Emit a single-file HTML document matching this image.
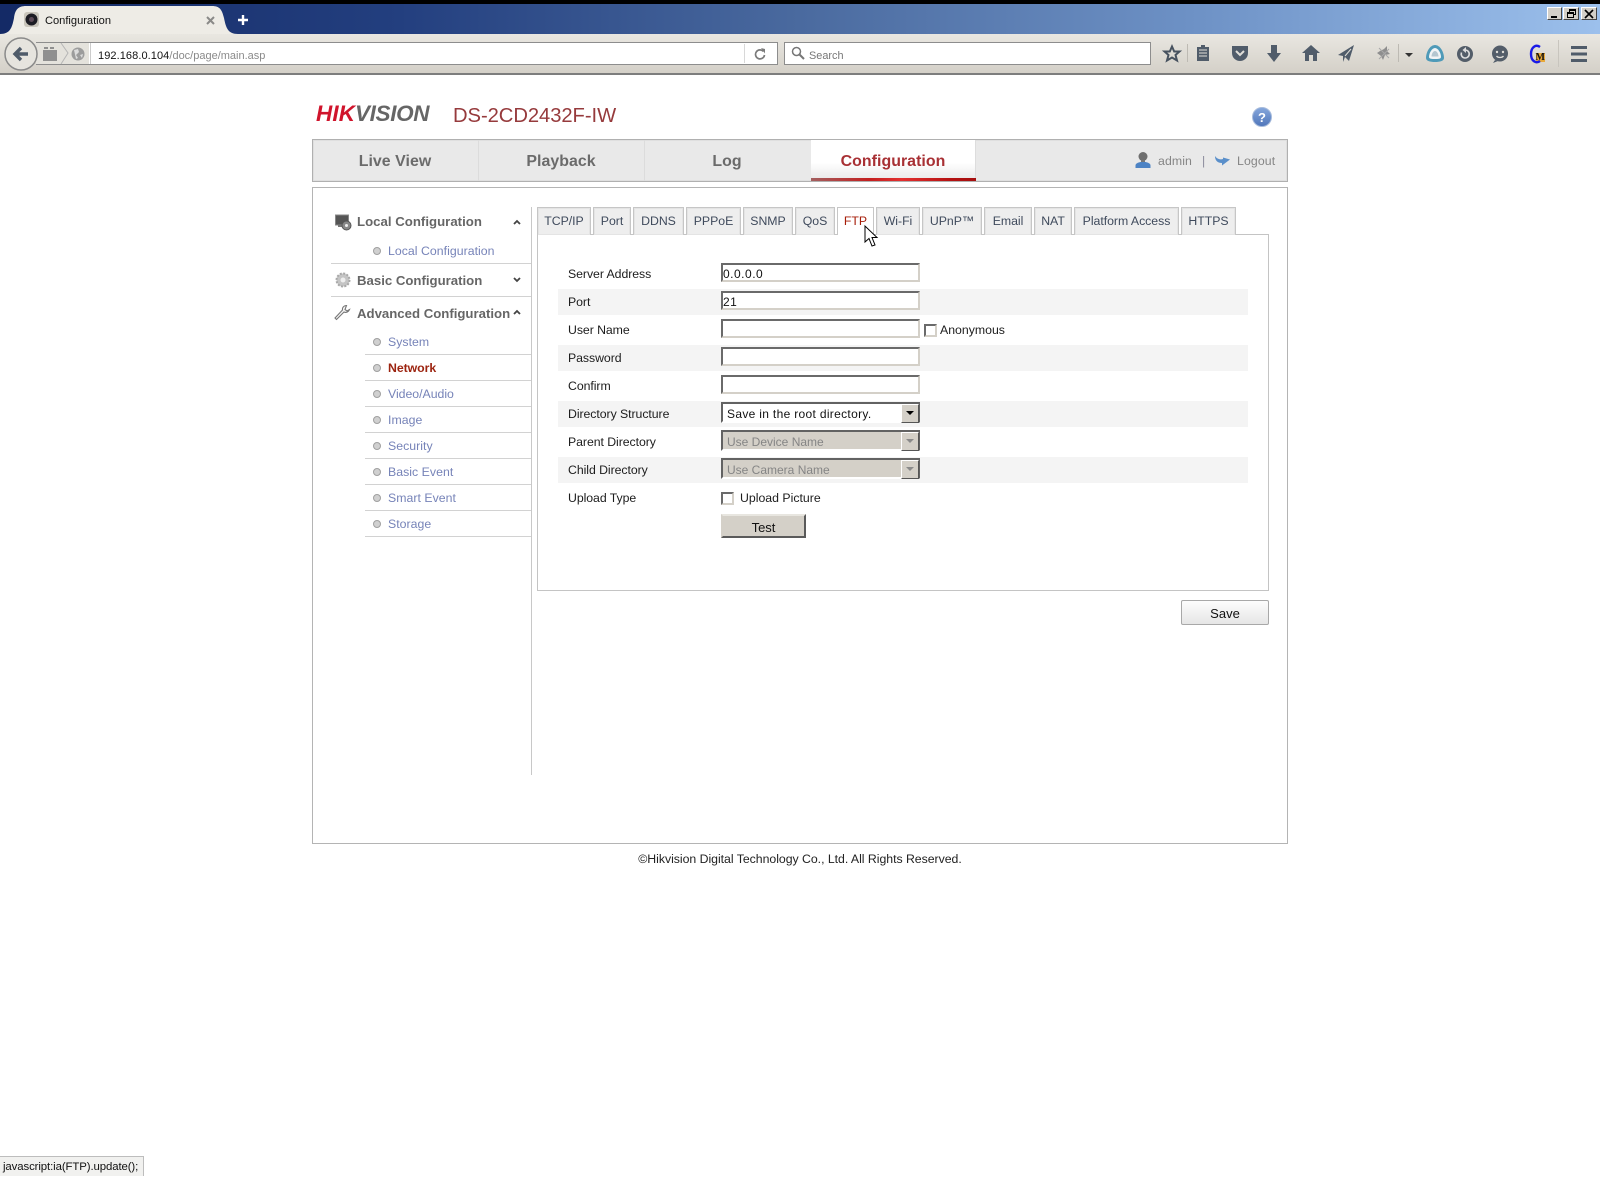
<!DOCTYPE html>
<html><head><meta charset="utf-8"><title>Configuration</title>
<style>
html,body{margin:0;padding:0;background:#fff}
body{width:1600px;height:1176px;position:relative;overflow:hidden;font-family:"Liberation Sans",sans-serif;font-size:12.3px;color:#222}
.a,.l,.s,.b,.t,.i,.sel,.cb,.ln,.dot{position:absolute;box-sizing:border-box}
.a{white-space:nowrap}
.l{left:568px;height:20px;line-height:20px;white-space:nowrap;color:#1c1c1c;letter-spacing:-.06px}
.b{left:558px;width:690px;height:26px;background:#f4f4f4}
.s{left:388px;height:20px;line-height:20px;white-space:nowrap;color:#7683b8;letter-spacing:.03px}
.ln{left:365px;width:166px;height:1px;background:#d2d2d2}
.dot{left:373px;width:8px;height:8px;border-radius:50%;background:#d0d0d0;border:1px solid #a0a0a0}
.t{top:207px;height:28px;background:#eeeeee;border:1px solid #c6c6c6;border-bottom:0;box-shadow:inset 0 0 0 1px #e4e4e4;text-align:center;line-height:27px;color:#3f4a5c;white-space:nowrap;letter-spacing:-.03px}
.i{left:721px;width:199px;height:19px;background:#fff;border:2px solid;border-color:#6a6a6a #d4d0c8 #d4d0c8 #6a6a6a;font-size:12px;line-height:19px;padding-left:0;letter-spacing:.5px;color:#111}
.sel{left:721px;width:199px;height:21px;background:#fff;border:2px solid;border-color:#626262 #626262 #fff #626262;font-size:12px;line-height:20px;padding-left:4px;letter-spacing:.32px;color:#111;white-space:nowrap}
.sel.d{background:#d4d0c8;color:#858585;letter-spacing:0}
.sel i{position:absolute;right:-1px;top:0;width:16px;height:17px;background:#d4d0c8;border:1px solid;border-color:#fff #555 #555 #fff}
.sel i:after{content:"";position:absolute;left:4px;top:6px;border:4px solid transparent;border-top:4px solid #000;border-bottom:0}
.sel.d i:after{border-top-color:#8a8a8a}
.cb{width:13px;height:13px;background:#fff;border:2px solid;border-color:#6a6a6a #d4d0c8 #d4d0c8 #6a6a6a}
.m{color:#666;font-weight:bold;font-size:13.2px;height:20px;line-height:20px;left:357px;letter-spacing:0}
.n{font-weight:bold;font-size:15.9px;color:#6b6b6b;top:152px;height:20px;line-height:20px;text-align:center;width:160px;letter-spacing:.05px}
svg{position:absolute;overflow:visible}
</style></head><body>

<!-- browser chrome -->
<div class="a" style="left:0;top:0;width:1600px;height:4px;background:#000"></div>
<div class="a" style="left:0;top:4px;width:1600px;height:30px;background:linear-gradient(90deg,#142a66 0%,#233f7f 25%,#4a6a9f 50%,#6e92c6 75%,#9cc0ec 100%)"></div>
<div class="a" style="left:0;top:34px;width:1600px;height:40px;background:linear-gradient(#e9e7e1,#d4d0c8);border-bottom:2px solid #7d7d7d;box-sizing:content-box;height:39px"></div>
<svg style="left:0;top:0" width="260" height="36"><path d="M0 34C10 34 12 28 14 18C15 10 18 6 26 6H212C220 6 222 10 224 18C226 28 228 34 238 34Z" fill="#eeece6"/></svg>
<svg style="left:24px;top:12px" width="16" height="16"><rect x="0" y="0" width="15" height="15" rx="3" fill="#c9c5bb"/><circle cx="7.5" cy="7.5" r="6" fill="#1c1c24"/><circle cx="7.5" cy="7.5" r="2.5" fill="#5c4a58"/></svg>
<div class="a" style="left:45px;top:13px;height:16px;line-height:16px;font-size:11.1px;color:#111">Configuration</div>
<svg style="left:206px;top:16px" width="9" height="9"><path d="M1 1L8 8M8 1L1 8" stroke="#8a8a88" stroke-width="2"/></svg>
<svg style="left:237px;top:14px" width="12" height="12"><path d="M6 1V11M1 6H11" stroke="#fff" stroke-width="2.4"/></svg>
<div class="a" style="left:1547px;top:7px;width:15px;height:13px;background:#d4d0c8;border:1px solid;border-color:#fff #444 #444 #fff"><div class="a" style="left:3px;top:8px;width:6px;height:2px;background:#000"></div></div>
<div class="a" style="left:1563px;top:7px;width:16px;height:13px;background:#d4d0c8;border:1px solid;border-color:#fff #444 #444 #fff"><div class="a" style="left:5px;top:1px;width:7px;height:6px;border:1px solid #000;border-top-width:2px"></div><div class="a" style="left:3px;top:4px;width:7px;height:6px;border:1px solid #000;border-top-width:2px;background:#d4d0c8"></div></div>
<div class="a" style="left:1581px;top:7px;width:16px;height:13px;background:#d4d0c8;border:1px solid;border-color:#fff #444 #444 #fff"><svg style="left:3px;top:2px" width="8" height="8"><path d="M0 0L8 8M8 0L0 8" stroke="#000" stroke-width="1.6"/></svg></div>

<!-- url bar -->
<div class="a" style="left:36px;top:42px;width:742px;height:23px;background:#fff;border:1px solid #8d8d8d"></div>
<div class="a" style="left:36px;top:43px;width:53px;height:21px;background:#e4e2dc"></div>
<svg style="left:4px;top:37px" width="36" height="36"><circle cx="17" cy="17" r="16" fill="#e6e4de" stroke="#8a8a8a" stroke-width="1.5"/><path d="M24 17H12M17 11L11 17L17 23" fill="none" stroke="#4f5b69" stroke-width="3.4"/></svg>
<svg style="left:42px;top:46px" width="16" height="16"><rect x="1" y="4" width="14" height="11" fill="#8f8f8f"/><rect x="2" y="1" width="4" height="2" fill="#8f8f8f"/><rect x="8" y="1" width="4" height="2" fill="#8f8f8f"/></svg>
<svg style="left:60px;top:43px" width="10" height="21"><path d="M1 0L8 10L1 21" fill="none" stroke="#b5b5b5"/></svg>
<svg style="left:71px;top:47px" width="14" height="14"><circle cx="7" cy="7" r="6.5" fill="#9c9c9c"/><path d="M3 3L7 2L8 5L5 8L7 11L5 12ZM9 8L12 7L11 11Z" fill="#dcdcdc"/></svg>
<div class="a" style="left:90px;top:43px;width:1px;height:21px;background:#ccc"></div>
<div class="a" style="left:98px;top:48px;height:16px;line-height:16px;font-size:11px;color:#8a8a8a;letter-spacing:0"><span style="color:#111;letter-spacing:.08px">192.168.0.104</span>/doc/page/main.asp</div>
<div class="a" style="left:744px;top:44px;width:1px;height:19px;background:#d8d8d8"></div>
<svg style="left:754px;top:48px" width="12" height="12"><path d="M9.5 3.5A4.5 4.5 0 1 0 10.5 7" fill="none" stroke="#7b7b7b" stroke-width="1.7"/><path d="M7 0L11 1V5.5Z" fill="#7b7b7b"/></svg>
<div class="a" style="left:784px;top:42px;width:367px;height:23px;background:#fff;border:1px solid #8d8d8d"></div>
<svg style="left:791px;top:46px" width="14" height="14"><circle cx="5.5" cy="5.5" r="4" fill="none" stroke="#777" stroke-width="1.5"/><path d="M8.5 8.5L13 13" stroke="#777" stroke-width="2"/></svg>
<div class="a" style="left:809px;top:48px;height:16px;line-height:16px;font-size:10.9px;color:#777">Search</div>

<!-- toolbar icons -->
<svg style="left:0;top:34px" width="1600" height="40" fill="#505c6a">
<path d="M1172 12.500L1174.200 17.500H1179.500L1175.500 21L1177 26.500L1172 23.500L1167 26.500L1168.500 21L1164.500 17.500H1169.800Z" fill="none" stroke="#47525f" stroke-width="2"/>
<rect x="1187" y="10" width="1" height="18" fill="#bdbab3"/>
<path d="M1201 11H1205V13H1209V27H1197V13H1201Z"/><path d="M1199 16H1207M1199 19H1207M1199 22H1207" stroke="#e0ded8" stroke-width="1"/>
<path d="M1232 12H1248V19C1248 24 1244 27 1240 27C1236 27 1232 24 1232 19Z"/><path d="M1236 17L1240 21L1244 17" fill="none" stroke="#e0ded8" stroke-width="2"/>
<path d="M1271 11H1277V19H1281L1274 28L1267 19H1271Z"/>
<path d="M1311 11L1320 19H1317V27H1313V21H1309V27H1305V19H1302Z"/>
<path d="M1354 11L1349 27L1345 23L1343 28V22L1338 21Z"/><path d="M1351 15L1345 22" stroke="#e0ded8"/>
<path d="M1377 19L1380 17L1384 15L1387 12L1387 17L1390 20L1385 21L1383 26L1381 22Z" fill="#8e8e8e"/><path d="M1379 14L1389 24M1389 15L1379 25" stroke="#a8a8a8"/>
<rect x="1398" y="10" width="1" height="18" fill="#bdbab3"/>
<path d="M1405 19H1413L1409 23Z" fill="#333"/>
<path d="M1435 11C1440 11 1444 18 1444 24C1444 27 1440 28 1435 28C1430 28 1426 27 1426 24C1426 18 1430 11 1435 11Z" fill="#4f9ab8"/><path d="M1435 14C1438 14 1441 19 1441 23C1441 25 1438 25 1435 25C1432 25 1429 25 1429 23C1429 19 1432 14 1435 14Z" fill="#f2f4f6"/><path d="M1435 17C1437 17 1438.500 20 1438.500 22.500H1431.500C1431.500 20 1433 17 1435 17Z" fill="#b4c6d0"/>
<circle cx="1465" cy="20" r="8" fill="#535d69"/><path d="M1461.5 18.5A4 4 0 1 0 1465 16" fill="none" stroke="#ddd" stroke-width="1.6"/><path d="M1466 13V19L1462.5 16Z" fill="#ddd"/>
<circle cx="1500" cy="19.5" r="8" fill="#535d69"/><path d="M1495 26L1493 29L1498 27Z"/><circle cx="1497" cy="18" r="1.2" fill="#e0ded8"/><circle cx="1503" cy="18" r="1.2" fill="#e0ded8"/><path d="M1496.5 22C1498 24 1502 24 1503.5 22" fill="none" stroke="#e0ded8" stroke-width="1.3"/>
<rect x="1536" y="19" width="9" height="9" fill="#e8a93a"/>
<path d="M1540 13C1536 10 1531 13 1531 20C1531 27 1536 30 1540 27" fill="none" stroke="#1a1ae6" stroke-width="2.4"/>
<text x="1535.5" y="26" font-family="Liberation Serif,serif" font-weight="bold" font-size="10" fill="#111">M</text>
<rect x="1558" y="6" width="1" height="27" fill="#c8c5be"/>
<path d="M1571 12H1587V15H1571ZM1571 18.500H1587V21.500H1571ZM1571 25H1587V28H1571Z"/>
</svg>

<!-- header -->
<div class="a" style="left:316px;top:102px;height:24px;line-height:24px;font-size:22.5px;font-weight:bold;font-style:italic;letter-spacing:.1px;color:#d0142c">HIK</div>
<div class="a" style="left:355px;top:102px;height:24px;line-height:24px;font-size:22.5px;font-weight:bold;font-style:italic;letter-spacing:-.35px;color:#666">VISION</div>
<div class="a" style="left:453px;top:103px;height:26px;line-height:26px;font-size:20.2px;color:#963a3c;letter-spacing:-.05px">DS-2CD2432F-IW</div>
<svg style="left:1251px;top:106px" width="22" height="22"><defs><linearGradient id="h" x1="0" y1="0" x2="0" y2="1"><stop offset="0" stop-color="#86a7dc"/><stop offset="1" stop-color="#4f76ba"/></linearGradient></defs><circle cx="11" cy="11" r="9.500" fill="url(#h)" stroke="#a8bcdc"/><text x="11" y="16" font-size="13" font-weight="bold" text-anchor="middle" fill="#fff" font-family="Liberation Sans,sans-serif">?</text></svg>

<!-- nav -->
<div class="a" style="left:312px;top:139px;width:976px;height:43px;background:#e9e9e9;border:1px solid #b0b0b0;box-shadow:inset 0 0 0 1px #bbb3"></div>
<div class="a" style="left:478px;top:140px;width:1px;height:41px;background:#dcdcdc"></div>
<div class="a" style="left:644px;top:140px;width:1px;height:41px;background:#dcdcdc"></div>
<div class="a" style="left:811px;top:140px;width:165px;height:41px;background:linear-gradient(#fff 55%,#e8e8e8);border-right:1px solid #ddd"></div>
<div class="a" style="left:811px;top:178px;width:165px;height:3px;background:linear-gradient(90deg,#a46060,#c32020 35%,#e33030 55%,#b51212 85%,#a51010)"></div>
<div class="a n" style="left:315px">Live View</div>
<div class="a n" style="left:481px">Playback</div>
<div class="a n" style="left:647px">Log</div>
<div class="a n" style="left:813px;color:#a83034">Configuration</div>
<svg style="left:1134px;top:151px" width="18" height="18"><circle cx="9" cy="5.500" r="4.500" fill="#6f6f6f"/><path d="M7 9H11V11H7Z" fill="#777"/><path d="M1.500 17V14.500C1.500 12.500 4 11.500 6.500 11H11.500C14 11.500 16.500 12.500 16.500 14.500V17Z" fill="#4d83c4"/></svg>
<div class="a" style="left:1158px;top:151px;height:20px;line-height:20px;color:#858585;letter-spacing:.1px">admin</div>
<div class="a" style="left:1202px;top:151px;height:20px;line-height:20px;color:#8a8a9c">|</div>
<svg style="left:1214px;top:154px" width="17" height="12"><path d="M1 2C1 7 4 9 8 9V11.500L16 5.500L9 3.500V5C6 6 3 5 1 2Z" fill="#5a8fca"/></svg>
<div class="a" style="left:1237px;top:151px;height:20px;line-height:20px;color:#858585;letter-spacing:.1px">Logout</div>

<!-- main box -->
<div class="a" style="left:312px;top:187px;width:976px;height:657px;border:1px solid #b4b4b4"></div>
<div class="a" style="left:531px;top:207px;width:1px;height:568px;background:#c8c8c8"></div>

<!-- sidebar -->
<svg style="left:335px;top:214px" width="18" height="18"><rect x="0.500" y="1" width="13" height="10" fill="#555" stroke="#888"/><rect x="3" y="11" width="7" height="2" fill="#777"/><circle cx="11.500" cy="11.500" r="4.500" fill="#888" stroke="#555"/><circle cx="11.500" cy="11.500" r="1.500" fill="#eee"/></svg>
<div class="a m" style="top:212px;letter-spacing:.02px">Local Configuration</div>
<svg style="left:513px;top:219px" width="8" height="6"><path d="M1 5L4 2L7 5" fill="none" stroke="#444" stroke-width="1.800"/></svg>
<div class="dot" style="top:247px"></div>
<div class="s" style="top:241px">Local Configuration</div>
<div class="ln" style="left:331px;width:200px;top:263px"></div>
<svg style="left:335px;top:272px" width="16" height="16"><circle cx="8" cy="8" r="6.500" fill="#c4c4c4" stroke="#a8a8a8" stroke-width="2" stroke-dasharray="2 1.400"/><circle cx="8" cy="8" r="2.500" fill="#eee"/></svg>
<div class="a m" style="top:270px;transform:translateY(1px)">Basic Configuration</div>
<svg style="left:513px;top:277px" width="8" height="6"><path d="M1 1L4 4L7 1" fill="none" stroke="#444" stroke-width="1.800"/></svg>
<div class="ln" style="left:331px;width:200px;top:296px"></div>
<svg style="left:333px;top:303px" width="18" height="18"><path d="M2 15L3.500 16.500L11 9C13 10 15.500 9 16.500 6.500L14 8L12 6.500L13.500 2.500C11 2.500 9 4.500 9.500 7Z" fill="#f4f4f4" stroke="#777" stroke-width="1.100"/></svg>
<div class="a m" style="top:304px">Advanced Configuration</div>
<svg style="left:513px;top:309px" width="8" height="6"><path d="M1 5L4 2L7 5" fill="none" stroke="#444" stroke-width="1.800"/></svg>

<div class="dot" style="top:338px"></div><div class="s" style="top:332px">System</div><div class="ln" style="top:354px"></div>
<div class="dot" style="top:364px"></div><div class="s" style="top:358px;color:#9c2410;font-weight:bold;letter-spacing:-.05px">Network</div><div class="ln" style="top:380px"></div>
<div class="dot" style="top:390px"></div><div class="s" style="top:384px;letter-spacing:-.02px">Video/Audio</div><div class="ln" style="top:406px"></div>
<div class="dot" style="top:416px"></div><div class="s" style="top:410px">Image</div><div class="ln" style="top:432px"></div>
<div class="dot" style="top:442px"></div><div class="s" style="top:436px">Security</div><div class="ln" style="top:458px"></div>
<div class="dot" style="top:468px"></div><div class="s" style="top:462px">Basic Event</div><div class="ln" style="top:484px"></div>
<div class="dot" style="top:494px"></div><div class="s" style="top:488px">Smart Event</div><div class="ln" style="top:510px"></div>
<div class="dot" style="top:520px"></div><div class="s" style="top:514px">Storage</div><div class="ln" style="top:536px"></div>

<!-- content box -->
<div class="a" style="left:537px;top:234px;width:732px;height:357px;border:1px solid #c4c4c4"></div>
<div class="t" style="left:537px;width:54px">TCP/IP</div>
<div class="t" style="left:593px;width:38px">Port</div>
<div class="t" style="left:633px;width:51px">DDNS</div>
<div class="t" style="left:686px;width:55px">PPPoE</div>
<div class="t" style="left:743px;width:50px">SNMP</div>
<div class="t" style="left:795px;width:40px">QoS</div>
<div class="t" style="left:837px;width:37px;background:#fff;box-shadow:none;color:#a61c08;height:28px">FTP</div>
<div class="t" style="left:876px;width:44px">Wi-Fi</div>
<div class="t" style="left:922px;width:60px">UPnP™</div>
<div class="t" style="left:984px;width:48px">Email</div>
<div class="t" style="left:1034px;width:38px">NAT</div>
<div class="t" style="left:1074px;width:105px">Platform Access</div>
<div class="t" style="left:1181px;width:55px">HTTPS</div>

<!-- form -->
<div class="b" style="top:289px"></div>
<div class="b" style="top:345px"></div>
<div class="b" style="top:401px"></div>
<div class="b" style="top:457px"></div>

<div class="l" style="top:264px">Server Address</div>
<div class="l" style="top:292px">Port</div>
<div class="l" style="top:320px">User Name</div>
<div class="l" style="top:348px">Password</div>
<div class="l" style="top:376px">Confirm</div>
<div class="l" style="top:404px">Directory Structure</div>
<div class="l" style="top:432px">Parent Directory</div>
<div class="l" style="top:460px">Child Directory</div>
<div class="l" style="top:488px">Upload Type</div>

<div class="i" style="top:263px">0.0.0.0</div>
<div class="i" style="top:291px">21</div>
<div class="i" style="top:319px"></div>
<div class="i" style="top:347px"></div>
<div class="i" style="top:375px"></div>
<div class="cb" style="left:924px;top:324px"></div>
<div class="a" style="left:940px;top:320px;height:20px;line-height:20px;color:#1c1c1c">Anonymous</div>
<div class="sel" style="top:402px">Save in the root directory.<i></i></div>
<div class="sel d" style="top:430px">Use Device Name<i></i></div>
<div class="sel d" style="top:458px">Use Camera Name<i></i></div>
<div class="cb" style="left:721px;top:492px"></div>
<div class="a" style="left:740px;top:488px;height:20px;line-height:20px;color:#1c1c1c">Upload Picture</div>
<div class="a" style="left:721px;top:514px;width:85px;height:24px;background:#d4d0c8;border:2px solid;border-color:#e8e6e0 #5a5a5a #5a5a5a #d4d0c8;text-align:center;line-height:24px;font-size:13px;color:#111">Test</div>
<div class="a" style="left:1181px;top:600px;width:88px;height:25px;background:linear-gradient(#fdfdfd,#e6e6e6);border:1px solid #a8a8a8;border-radius:2px;text-align:center;line-height:26px;font-size:13px;color:#111">Save</div>

<!-- cursor -->
<svg style="left:864px;top:225px" width="14" height="24"><path d="M1 1V17L5 13.500L8 21L11 20L8 12.500H13Z" fill="#fff" stroke="#000" stroke-width="1"/></svg>

<!-- footer -->
<div class="a" style="left:400px;top:849px;width:800px;height:20px;line-height:20px;text-align:center;color:#222;letter-spacing:-.03px">©Hikvision Digital Technology Co., Ltd. All Rights Reserved.</div>

<!-- status -->
<div class="a" style="left:0;top:1156px;width:144px;height:20px;background:#f1f1ef;border-top:1px solid #bdbdbd;border-right:1px solid #bdbdbd;line-height:21px;padding-left:3px;font-size:11.4px;color:#111;box-sizing:border-box;letter-spacing:-.1px">javascript:ia(FTP).update();</div>
</body></html>
